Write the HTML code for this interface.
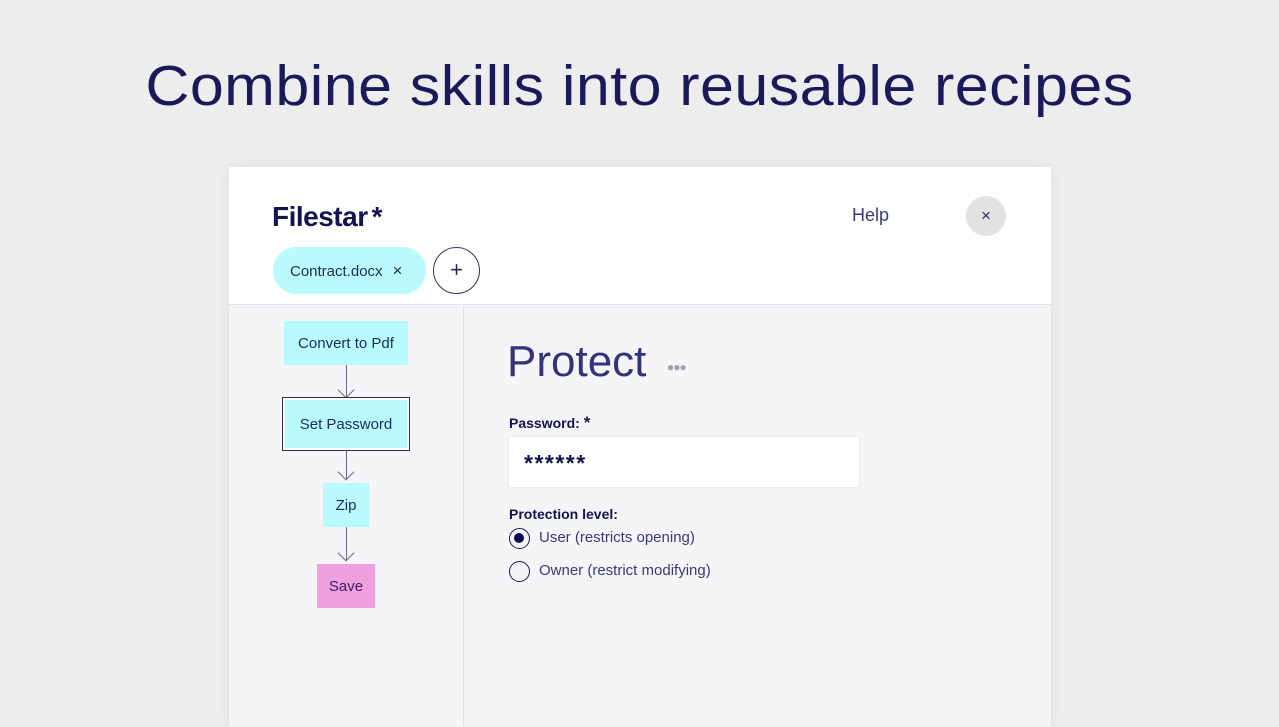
<!DOCTYPE html>
<html><head><meta charset="utf-8"><style>
*{margin:0;padding:0;box-sizing:border-box}
body{width:1279px;height:720px;background:#ededed;font-family:"Liberation Sans",sans-serif;color:#1a1a5e;position:relative;overflow:hidden}
.a{position:absolute}
h1{position:absolute;left:0;width:1279px;top:53px;text-align:center;font-weight:normal;font-size:57px;color:#1a1a5a;letter-spacing:0.4px;transform:scaleX(1.07)}
.card{left:229px;top:167px;width:822px;height:560px;background:#f5f5f8;box-shadow:0 0 12px rgba(0,0,0,0.06)}
.hdr{left:0;top:0;width:822px;height:138px;background:#fff;border-bottom:1px solid #e2e2e8}
.box{position:absolute;background:#b9fbfd;display:flex;align-items:center;justify-content:center;font-size:15px;color:#1e2a5e}
.arrow{position:absolute;width:1px;background:#6a6a8e}
.ah{position:absolute;width:12px;height:12px;border-right:1px solid #6a6a8e;border-bottom:1px solid #6a6a8e;transform:rotate(45deg)}
</style></head><body>
<h1>Combine skills into reusable recipes</h1>
<div class="a card">
 <div class="a hdr">
  <div class="a" style="left:43px;top:34px;font-size:28px;font-weight:bold;color:#14144f;letter-spacing:-0.5px">Filestar<span style="margin-left:4px">*</span></div>
  <div class="a" style="left:44px;top:80px;width:153px;height:47px;border-radius:24px;background:#b9fbfd;font-size:15px;color:#1e2a5e;line-height:47px;padding-left:17px">Contract.docx<span style="margin-left:10px;font-size:17px">×</span></div>
  <div class="a" style="left:204px;top:80px;width:47px;height:47px;border-radius:50%;border:1.5px solid #33336a;text-align:center;line-height:43px;font-size:22px;color:#2a2a60">+</div>
  <div class="a" style="left:623px;top:38px;font-size:18px;color:#3a3a78">Help</div>
  <div class="a" style="left:737px;top:29px;width:40px;height:40px;border-radius:50%;background:#e2e2e2;text-align:center;line-height:40px;font-size:17px;color:#2a2a60">×</div>
 </div>
 <div class="a" style="left:234px;top:139px;width:1px;height:420px;background:#e2e2e8"></div>
 <div class="box" style="left:55px;top:154px;width:124px;height:44px">Convert to Pdf</div>
 <div class="arrow" style="left:117px;top:198px;height:32px"></div><div class="ah" style="left:111px;top:217px"></div>
 <div class="box" style="left:54px;top:231px;width:126px;height:52px;border:2px solid #fff;outline:1.5px solid #2a2a60">Set Password</div>
 <div class="arrow" style="left:117px;top:283px;height:29px"></div><div class="ah" style="left:111px;top:299px"></div>
 <div class="box" style="left:94px;top:316px;width:46px;height:44px">Zip</div>
 <div class="arrow" style="left:117px;top:360px;height:33px"></div><div class="ah" style="left:111px;top:380px"></div>
 <div class="box" style="left:88px;top:397px;width:58px;height:44px;background:#ee9fdd;color:#3a2060">Save</div>
 <div class="a" style="left:278px;top:170px;font-size:44px;color:#33337a">Protect</div>
 <div class="a" style="left:438px;top:193px;font-size:12px;color:#a0a0a8;letter-spacing:-1px">●●●</div>
 <div class="a" style="left:280px;top:246px;font-size:14px;font-weight:bold;color:#14144f">Password: <span style="font-size:17px">*</span></div>
 <div class="a" style="left:279px;top:269px;width:352px;height:52px;background:#fff;border:1px solid #ececf0;border-radius:3px;font-size:23px;font-weight:bold;color:#14144f;line-height:52px;padding-left:15px;letter-spacing:1.5px">******</div>
 <div class="a" style="left:280px;top:339px;font-size:14px;font-weight:bold;color:#14144f">Protection level:</div>
 <div class="a" style="left:280px;top:361px;width:21px;height:21px;border-radius:50%;border:1.5px solid #1a1a5e"><div class="a" style="left:4px;top:4px;width:10px;height:10px;border-radius:50%;background:#0d0d52"></div></div>
 <div class="a" style="left:310px;top:362px;font-size:15px;color:#3a3a78">User (restricts opening)</div>
 <div class="a" style="left:280px;top:394px;width:21px;height:21px;border-radius:50%;border:1.5px solid #1a1a5e"></div>
 <div class="a" style="left:310px;top:395px;font-size:15px;color:#3a3a78">Owner (restrict modifying)</div>
</div>
</body></html>
